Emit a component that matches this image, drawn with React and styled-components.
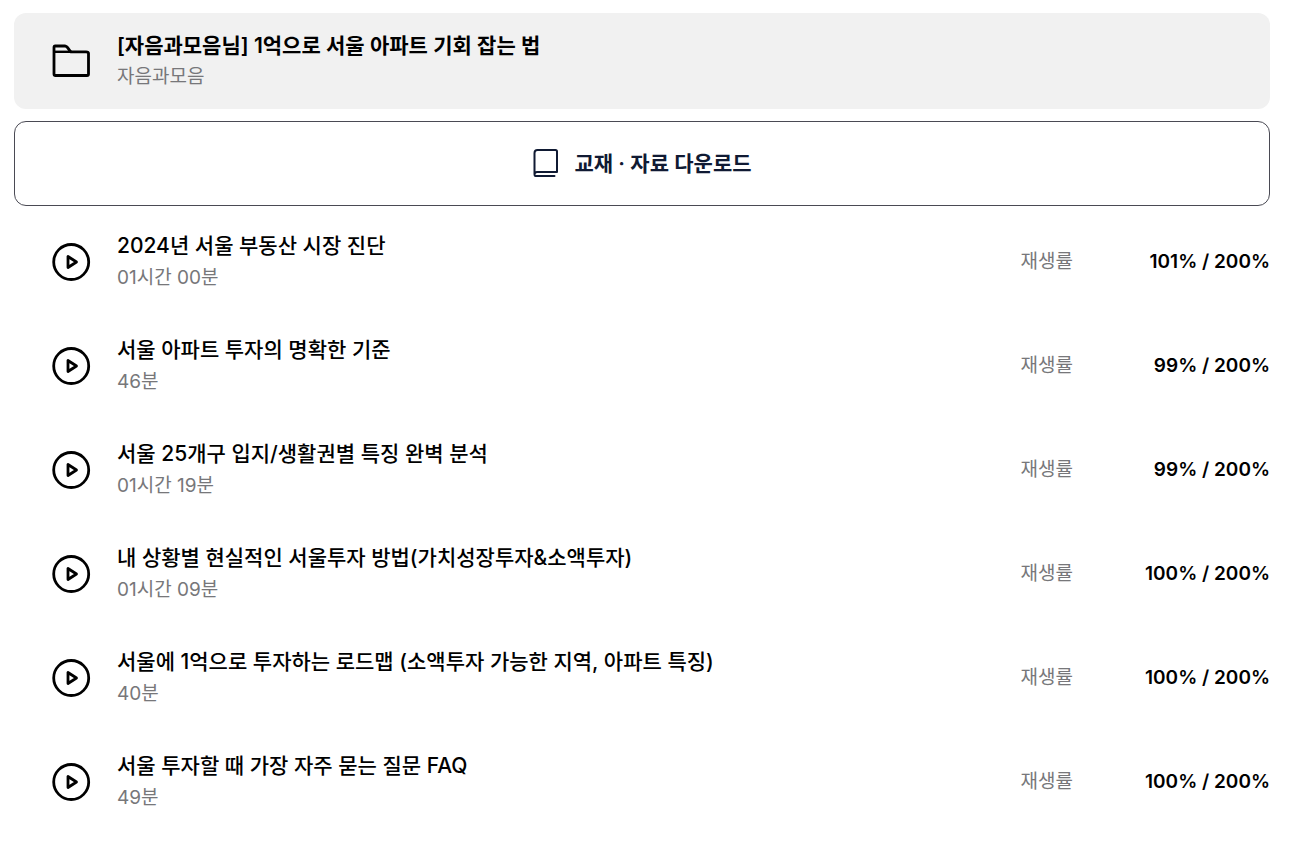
import React from "react";
import styled, { createGlobalStyle } from "styled-components";

const Global = createGlobalStyle`
  * { box-sizing: border-box; }
  body {
    margin: 0;
    background: #fff;
    color: #000;
    font-family: Inter, "Noto Sans CJK KR", sans-serif;
  }
`;

const Page = styled.main`
  display: flex;
  flex-direction: column;
  padding: 13px 24px 0 14px;
`;

const CourseHeader = styled.header`
  display: flex;
  align-items: center;
  gap: 25px;
  height: 96px;
  padding: 2px 36px 0;
  border-radius: 12px;
  background: #f1f1f1;
`;

const TextBlock = styled.div`
  display: flex;
  flex-direction: column;
  flex: 1;
  min-width: 0;
`;

const Title = styled.h2`
  margin: 0;
  font-size: 21px;
  line-height: ${(p) => (p.$strong ? 30 : 32)}px;
  font-weight: ${(p) => (p.$strong ? 600 : 500)};
`;

const Caption = styled.p`
  margin: 0;
  font-size: 19px;
  line-height: 32px;
  color: #77777a;
`;

const DownloadButton = styled.button`
  display: flex;
  align-items: center;
  justify-content: center;
  gap: 14px;
  height: 85px;
  margin-top: 12px;
  border: 1px solid #4a4a54;
  border-radius: 12px;
  background: #fff;
  color: #101a33;
  font: 600 21px/32px Inter, "Noto Sans CJK KR", sans-serif;
  cursor: pointer;
`;

const LessonList = styled.ul`
  margin: 4px 0 0;
  padding: 0;
  list-style: none;
`;

const Lesson = styled.li`
  display: flex;
  align-items: center;
  gap: 25px;
  height: 104px;
  padding-left: 36px;
`;

const RateLabel = styled.span`
  font-size: 19px;
  line-height: 32px;
  color: #77777a;
`;

const RateValue = styled.span`
  width: 172px;
  text-align: right;
  font-size: 19px;
  line-height: 32px;
  font-weight: 600;
`;

const Icon = styled.svg`
  flex: none;
  fill: none;
  stroke: currentColor;
`;

const lessons = [
  ["2024년 서울 부동산 시장 진단", "01시간 00분", "101% / 200%"],
  ["서울 아파트 투자의 명확한 기준", "46분", "99% / 200%"],
  ["서울 25개구 입지/생활권별 특징 완벽 분석", "01시간 19분", "99% / 200%"],
  ["내 상황별 현실적인 서울투자 방법(가치성장투자&소액투자)", "01시간 09분", "100% / 200%"],
  ["서울에 1억으로 투자하는 로드맵 (소액투자 가능한 지역, 아파트 특징)", "40분", "100% / 200%"],
  ["서울 투자할 때 가장 자주 묻는 질문 FAQ", "49분", "100% / 200%"],
];

const FolderIcon = () => (
  <Icon width="42" height="42" viewBox="0 0 42 42" strokeWidth="2.800" strokeLinejoin="round" aria-hidden="true">
    <path d="M5.200 5H15Q17 5 20.500 10.800H36Q38.500 10.800 38.500 12.300V33Q38.500 34.500 37 34.500H5.500Q4 34.500 4 33V6.500Q4 5 5.200 5Z" />
    <path d="M4 10.800H22" strokeWidth="2.400" />
  </Icon>
);

const BookIcon = () => (
  <Icon width="28" height="32" viewBox="0 0 28 32" strokeWidth="2" strokeLinejoin="round" strokeLinecap="round" aria-hidden="true">
    <path d="M22.500 28H3.500Q2.500 28 2.500 26V5Q2.500 2 5.500 2H23.500Q25 2 25 3.500V24H5Q2.500 24 2.500 26.500" />
  </Icon>
);

const PlayIcon = () => (
  <Icon width="42" height="42" viewBox="0 0 42 42" strokeWidth="2.800" strokeLinejoin="round" aria-hidden="true">
    <circle cx="21.200" cy="21" r="17.500" />
    <path d="M18 15.500V26.500L26.500 21Z" />
  </Icon>
);

export default function App() {
  return (
    <>
      <Global />
      <Page>
        <CourseHeader>
          <FolderIcon />
          <TextBlock>
            <Title as="h1" $strong>[자음과모음님] 1억으로 서울 아파트 기회 잡는 법</Title>
            <Caption>자음과모음</Caption>
          </TextBlock>
        </CourseHeader>
        <DownloadButton type="button">
          <BookIcon />
          교재 · 자료 다운로드
        </DownloadButton>
        <LessonList>
          {lessons.map(([title, time, rate]) => (
            <Lesson key={title}>
              <PlayIcon />
              <TextBlock>
                <Title>{title}</Title>
                <Caption>{time}</Caption>
              </TextBlock>
              <RateLabel>재생률</RateLabel>
              <RateValue>{rate}</RateValue>
            </Lesson>
          ))}
        </LessonList>
      </Page>
    </>
  );
}
